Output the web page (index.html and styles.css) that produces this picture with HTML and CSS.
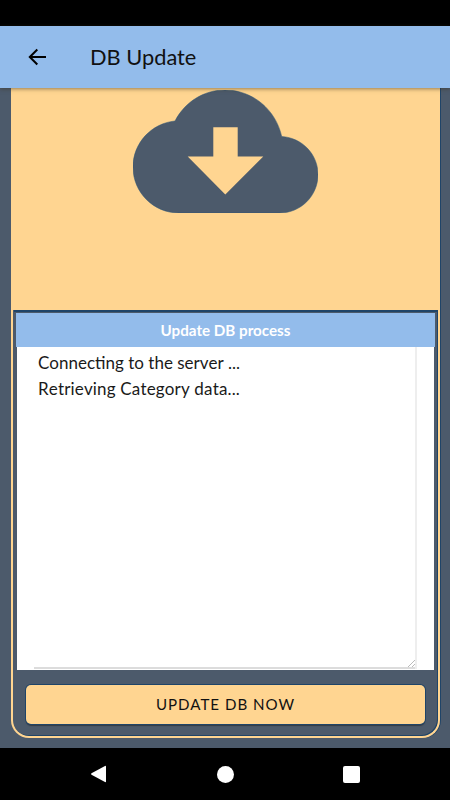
FILE: index.html
```html
<!DOCTYPE html>
<html lang="en">
<head>
<meta charset="utf-8">
<title>DB Update</title>
<link rel="stylesheet" href="styles.css">
</head>
<body>
<div class="screen">
  <div class="status-bar"></div>
  <header class="app-bar">
    <svg class="back" width="24" height="24" viewBox="0 0 24 24"><path d="M21 12H5.200M12.300 4.500L4.800 12L12.300 19.500"/></svg>
    <h1 class="title">DB Update</h1>
  </header>
  <main class="content">
    <section class="card">
      <div class="hero">
        <svg class="cloud" width="185" height="123" viewBox="0 0 185 123">
          <path class="cloud-body" d="M148.700 46.500C142.800 19.500 119.500 0 92 0C70.400 0 51.700 12.200 42 31C18.400 33.300 0 53 0 77C0 102.500 20.500 123 46 123H146.500C167.800 123 185 105.800 185 84.500C185 64.200 169 47.700 148.700 46.500Z"/>
          <path class="cloud-arrow" d="M80.300 37.200H104.700V66.500H130.300L92.300 104.500L54.700 66.500H80.300Z"/>
        </svg>
      </div>
      <div class="panel">
        <div class="panel-title">Update DB process</div>
        <div class="log">
          <div class="log-box">
            <p class="log-line">Connecting to the server ...</p>
            <p class="log-line log-line-wide">Retrieving Category data...</p>
            <svg class="grip" width="7" height="7" viewBox="0 0 7 7"><path d="M0 7L7 0M4 7L7 4" /></svg>
          </div>
        </div>
      </div>
      <div class="actions">
        <button class="update-btn" type="button">UPDATE DB NOW</button>
      </div>
    </section>
  </main>
  <nav class="nav-bar">
    <svg width="17" height="18" viewBox="0 0 17 18"><path class="nav-icon" d="M16 1.500V16.500Q16 17.500 15 17L1.500 9.800Q.5 9 1.500 8.200L15 1Q16 .5 16 1.500Z"/></svg>
    <span class="nav-home"></span>
    <span class="nav-recent"></span>
  </nav>
</div>
</body>
</html>
```
FILE: styles.css
```css
* { box-sizing: border-box; }
html, body { margin: 0; padding: 0; }
body { font-family: Lato, sans-serif; background: #4c5a6b; }
.screen { width: 450px; height: 800px; display: flex; flex-direction: column; overflow: hidden; }
.status-bar { height: 26px; background: #000; flex: none; }
.app-bar {
  height: 62px; flex: none; background: #93bceb; display: flex; align-items: center;
  padding-left: 25px; position: relative; z-index: 2;
  box-shadow: 0 1px 4px rgba(60, 50, 30, .55);
}
.back { fill: none; stroke: #000; stroke-width: 2; flex: none; }
.title { margin: 0 0 2px 41px; font-size: 21.800px; font-weight: 400; color: #111; }
.content { flex: 1; min-height: 0; padding: 0 10px 10px 11px; background: #4c5a6b; display: flex; }
.card {
  flex: 1; display: flex; flex-direction: column; border: 2px solid #ffd591; border-top: 0;
  border-radius: 0 0 18px 18px; box-shadow: 1px 0 0 #1f4468, inset -1px -1px 0 #1f4468;
}
.hero { height: 222px; flex: none; background: #ffd591; display: flex; justify-content: center; padding-top: 2px; }
.cloud-body { fill: #4c5a6b; stroke: #2a5478; stroke-width: .5; }
.cloud-arrow { fill: #ffd591; }
.cloud { margin-right: 1px; }
.panel { flex: none; height: 360px; background: #4c5a6b; margin: 0 1px; border-top: 2px solid #1f4468; padding: 1px 2px 0; display: flex; flex-direction: column; }
.panel-title { height: 34px; flex: none; margin: 0; background: #93bceb; color: #fff; font-size: 15.200px; font-weight: 700; display: flex; align-items: center; justify-content: center; }
.log { flex: none; height: 323px; background: #fff; margin: 0 1px; padding-right: 17px; }
.log-box { height: 322px; position: relative; padding: 3px 0 0 21px; border-right: 2px solid #eee; }
.log-box::after { content: ""; position: absolute; left: 17px; right: 0; bottom: 0; height: 2px; background: #dcdcdc; }
.log-line { margin: 0; font-size: 17px; line-height: 26px; color: #1a1a1a; font-kerning: none; }
.log-line-wide { letter-spacing: .16px; }
.grip { position: absolute; right: 0; bottom: 2px; stroke: #bbb; stroke-width: 1; fill: none; }
.actions { flex: 1; padding: 15px 0 0 13px; }
.update-btn {
  width: 399px; height: 39px; display: block; background: #ffd591; color: #111; padding: 0 0 1px;
  font-family: Lato, sans-serif; font-size: 15.100px; letter-spacing: 1px; border: 0; border-radius: 5px;
  box-shadow: 0 0 0 1px #1f4468, 0 2px 1px rgba(30, 30, 30, .5);
}
.nav-bar { height: 52px; flex: none; background: #000; position: relative; display: flex; align-items: center; justify-content: space-between; padding: 0 90px; }
.nav-icon { fill: #fff; }
.nav-home { width: 17px; height: 17px; border-radius: 50%; background: #fff; }
.nav-recent { width: 17px; height: 17px; border-radius: 2px; background: #fff; }
```
